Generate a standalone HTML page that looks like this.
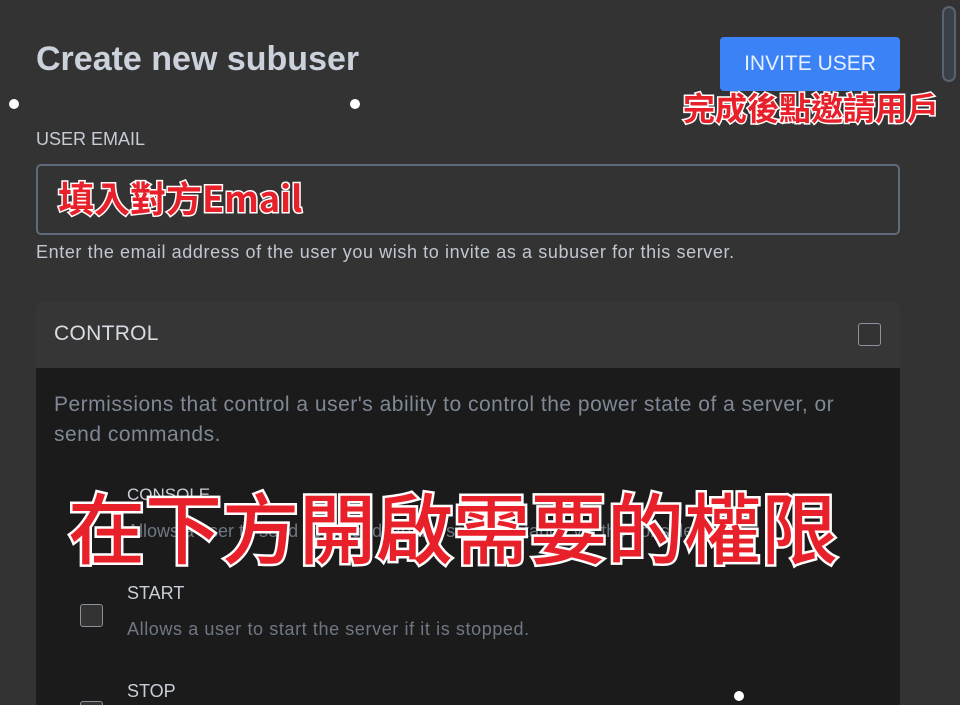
<!DOCTYPE html>
<html><head><meta charset="utf-8"><style>
*{margin:0;padding:0;box-sizing:border-box}
html,body{width:960px;height:705px;overflow:hidden}
body{background:#333;font-family:"Liberation Sans","Noto Sans CJK TC",sans-serif;position:relative}
.a{position:absolute;white-space:nowrap}
.red{color:#e8202a;font-family:"Noto Sans CJK TC",sans-serif;font-weight:700;paint-order:stroke fill;-webkit-text-stroke:3px #fff;white-space:nowrap}
.dot{position:absolute;width:10px;height:10px;border-radius:50%;background:#fff}
.cb{position:absolute;width:23px;height:23px;border:1.5px solid #8a929c;border-radius:3px;background:#333}
</style></head><body>
<div class="a" style="left:36px;top:40px;font-size:34px;font-weight:bold;color:#cbd2dc;">Create new subuser</div>
<div class="a" style="left:720px;top:37px;width:180px;height:54px;background:#3b82f6;border-radius:4px;color:#e8f0ff;font-size:21px;text-align:center;line-height:54px">INVITE USER</div>
<div class="a" style="left:942px;top:6px;width:14px;height:76px;border:2px solid #5a6470;border-radius:7px;background:#3a4048"></div>
<div class="a red" style="left:683px;top:86px;font-size:32px;line-height:42px">完成後點邀請用戶</div>
<div class="dot" style="left:9px;top:99px"></div>
<div class="dot" style="left:350px;top:99px"></div>
<div class="a" style="left:36px;top:129px;font-size:18px;color:#c5ccd6">USER EMAIL</div>
<div class="a" style="left:36px;top:164px;width:864px;height:71px;border:2px solid #5d6b7a;border-radius:5px"></div>
<div class="a red" style="left:58px;top:171px;font-size:36px;line-height:52px">填入對方Email</div>
<div class="a" style="left:36px;top:242px;font-size:18px;letter-spacing:0.6px;color:#c0c7d0">Enter the email address of the user you wish to invite as a subuser for this server.</div>
<div class="a" style="left:36px;top:302px;width:864px;height:66px;background:#363636;border-radius:5px 5px 0 0"></div>
<div class="a" style="left:54px;top:322px;font-size:21px;letter-spacing:0.3px;color:#d8dde4">CONTROL</div>
<div class="cb" style="left:858px;top:323px"></div>
<div class="a" style="left:36px;top:368px;width:864px;height:340px;background:#1b1b1b"></div>
<div class="a" style="left:54px;top:390px;width:830px;font-size:21px;line-height:30px;letter-spacing:0.5px;color:#7f8895;white-space:normal">Permissions that control a user's ability to control the power state of a server, or send commands.</div>
<div class="a" style="left:127px;top:485px;font-size:17px;color:#c8ced6">CONSOLE</div>
<div class="a" style="left:127px;top:521px;font-size:18px;color:#6f7884">Allows a user to send commands to the server instance via the console.</div>
<div class="a red" style="left:68px;top:476px;font-size:77px;line-height:100px;font-weight:500;-webkit-text-stroke:5px #fff">在下方開啟需要的權限</div>
<div class="a" style="left:127px;top:583px;font-size:18px;color:#c8ced6">START</div>
<div class="cb" style="left:80px;top:604px"></div>
<div class="a" style="left:127px;top:619px;font-size:18px;letter-spacing:0.6px;color:#6f7884">Allows a user to start the server if it is stopped.</div>
<div class="a" style="left:127px;top:681px;font-size:18px;color:#c8ced6">STOP</div>
<div class="cb" style="left:80px;top:701px"></div>
<div class="dot" style="left:734px;top:691px"></div>
</body></html>
